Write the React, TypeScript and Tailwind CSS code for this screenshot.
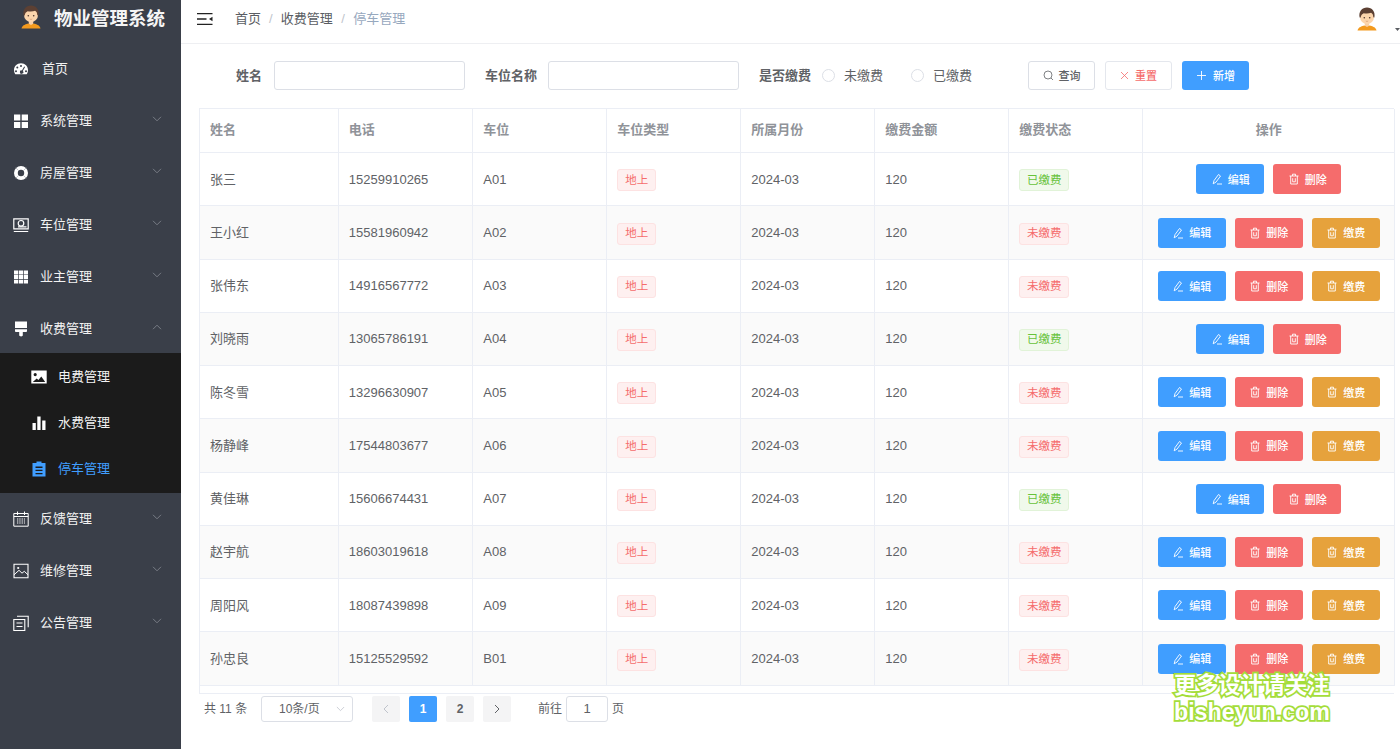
import React from "react";

const ff = "font-['Liberation_Sans','Noto_Sans_CJK_SC',sans-serif]";

function Chevron({ up = false }: { up?: boolean }) {
  return (
    <svg width="10" height="6" viewBox="0 0 10 6" className="text-[#7f838c]" fill="none" stroke="currentColor" strokeWidth="0.9">
      {up ? <path d="M1 5.2 L5 1.2 L9 5.2" /> : <path d="M1 0.8 L5 4.8 L9 0.8" />}
    </svg>
  );
}

const I = ({ children, w = 16, h = 16 }: { children: React.ReactNode; w?: number; h?: number }) => (
  <svg width={w} height={h} viewBox="0 0 16 16" fill="none">{children}</svg>
);

const icons: Record<string, React.ReactNode> = {
  dash: (
    <I><path fillRule="evenodd" clipRule="evenodd" fill="#fff" d="M8 2.200C3.900 2.200 1 5.300 1 9.200c0 1.500.4 2.700 1.100 3.700.2.200.4.300.7.300h10.400c.3 0 .5-.1.7-.3.7-1 1.100-2.200 1.100-3.700 0-3.900-2.900-7-7-7ZM8 4a1 1 0 1 1 0 2 1 1 0 0 1 0-2ZM4.300 5.500a1 1 0 1 1 0 2 1 1 0 0 1 0-2ZM3 9.200a1 1 0 1 1 0 2 1 1 0 0 1 0-2Zm10 0a1 1 0 1 1 0 2 1 1 0 0 1 0-2ZM11.200 5.400l.9.5-2.300 4a1.700 1.700 0 1 1-.9-.5l2.300-4Z" /></I>
  ),
  grid: (
    <I><path fill="#fff" d="M1 1.500h6.300v6.100H1zM8.700 1.500H15v6.100H8.700zM1 8.900h6.300V15H1zM8.700 8.900H15V15H8.700z" /></I>
  ),
  ring: (
    <I><circle cx="8" cy="8" r="5.100" stroke="#fff" strokeWidth="3.800" /><path stroke="#8a8e96" strokeWidth=".5" d="M2.500 2.500l3 3M13.500 2.500l-3 3M2.500 13.500l3-3M13.500 13.500l-3-3" /></I>
  ),
  cam: (
    <I><path stroke="#fff" strokeWidth="1.200" d="M.8 1.800h14.400v10H.8z" /><circle cx="8" cy="6.300" r="2.800" stroke="#fff" strokeWidth="1.200" /><path stroke="#fff" strokeWidth="1.200" d="M5 9.800h8.500M.8 14.500h14.400" /></I>
  ),
  th: (
    <I><path fill="#fff" d="M1 1.500h4.200v3.900H1zM5.900 1.500h4.200v3.900H5.900zM10.800 1.500H15v3.900h-4.200zM1 6.100h4.200v3.900H1zM5.900 6.100h4.200v3.900H5.900zM10.800 6.100H15v3.900h-4.200zM1 10.700h4.200v3.900H1zM5.900 10.700h4.200v3.900H5.900zM10.800 10.700H15v3.900h-4.200z" /></I>
  ),
  brush: (
    <I><path fill="#fff" d="M2 .5h12v6.500H2zM2 8.200h12V10c0 .5-.4 1-1 1H9.800v3.300c0 .7-.8 1.200-1.700 1.200s-1.900-.5-1.900-1.200V11H3c-.6 0-1-.5-1-1z" /></I>
  ),
  image: (
    <I><path fillRule="evenodd" fill="#fff" d="M.3 1.500h15.400v13H.3zM4.200 4a1.600 1.600 0 1 0 0 3.200 1.600 1.600 0 0 0 0-3.200ZM1.800 13h12.400l-3.900-5.500-2.900 3.400-1.700-1.300z" /></I>
  ),
  bars: (
    <I><path fill="#fff" d="M1.500 8h3.300v7H1.500zM6.300 1.500h3.300V15H6.300zM11.200 5.500h3.300V15h-3.300z" /></I>
  ),
  clip: (
    <I><path fillRule="evenodd" fill="#409eff" d="M5.500.5h5V2H14.500v13.500h-13V2H5.500zM4.500 5.500v1.400h7V5.500zM4.500 8.700v1.400h7V8.700zM4.500 11.900v1.400h7v-1.400z" /></I>
  ),
  cal: (
    <I><path stroke="#fff" strokeWidth="1" d="M.8 2.500h14.400v12.700H.8zM.8 5.500h14.400M4.500.5v3.500M11.500.5v3.500" /><path stroke="#fff" strokeWidth="1.100" strokeDasharray="1.300 1" d="M4 8h8M4 10h8M4 12h8" /></I>
  ),
  pic: (
    <I><path stroke="#fff" strokeWidth="1.100" d="M1 1.200h14v13.600H1z" /><path stroke="#fff" strokeWidth="1" d="M1 11.800 6 7.300l3 2.900 2.300-1.900 3.700 3.500" /><circle cx="5.200" cy="5" r="1.100" fill="#fff" /></I>
  ),
  copy: (
    <I><path stroke="#fff" strokeWidth="1.100" d="M.8 4.500h11v11h-11zM4 1.200h11.200v11M3.500 8h6M3.500 11.500h6" /></I>
  ),
};

function TopItem({ icon, label, open, home }: { icon: string; label: string; open?: boolean; home?: boolean }) {
  return (
    <div className="h-[52px] flex items-center pl-[13px] pr-[19px]">
      <span className="w-[16px] h-[16px] flex">{icons[icon]}</span>
      <span className={`${home ? "ml-[13px]" : "ml-[11px]"} text-[13px] text-[#f2f2f2] flex-1`}>{label}</span>
      {!home && <span className="flex -mt-[4px]"><Chevron up={open} /></span>}
    </div>
  );
}

function SubItem({ icon, label, active }: { icon: string; label: string; active?: boolean }) {
  return (
    <div className="h-[46px] flex items-center pl-[31px]">
      <span className="w-[16px] h-[16px] flex">{icons[icon]}</span>
      <span className={`ml-[11px] text-[13px] ${active ? "text-[#409eff]" : "text-[#f2f2f2]"}`}>{label}</span>
    </div>
  );
}

function Avatar({ size }: { size: number }) {
  return (
    <svg width={size} height={size} viewBox="0 0 24 24">
      <path fill="#f39a1e" d="M2.500 23.500c.5-3 4-5 9.500-5s9 2 9.500 5z" />
      <path fill="#f9cfa5" d="M9.800 15h4.400v3.700L12 20l-2.200-1.300z" />
      <ellipse cx="12" cy="10" rx="7" ry="7.200" fill="#fcd5ac" />
      <path fill="#5c4033" d="M4.600 10.500C3.500 4.500 7 .6 12 .6s8.500 3.900 7.400 9.900l-1.100-.2c0-2.400-.9-3.800-2.200-4.500-2.200 1-5.500 1-7.400.4-1.600.9-2.800 2-3 4.200z" />
      <circle cx="9.300" cy="10.800" r=".8" fill="#4a3328" />
      <circle cx="14.700" cy="10.800" r=".8" fill="#4a3328" />
      <path d="M10.800 14c.8.5 1.600.5 2.400 0" stroke="#c98a60" strokeWidth=".6" fill="none" />
    </svg>
  );
}

const Pencil = () => (
  <svg width="12" height="12" viewBox="0 0 12 12" fill="none" stroke="#fff" strokeWidth=".9">
    <path d="M2.200 10.800 3 7.600 7.500 1.500l2 1.500L5 9.100zM6 11h5" />
  </svg>
);
const Trash = () => (
  <svg width="12" height="12" viewBox="0 0 12 12" fill="none" stroke="#fff" strokeWidth=".9">
    <path d="M1.500 3h9M4.500 3V1.200h3V3M2.700 3v8h6.600V3M4.700 5.200v3.600h2.600V5.200" />
  </svg>
);

function Btn({ color, icon, label }: { color: string; icon: React.ReactNode; label: string }) {
  return (
    <span className={`w-[68px] h-[30px] rounded-[3px] ${color} text-white text-[11px] font-medium flex items-center justify-center gap-[5px]`}>
      {icon}
      <span className="translate-y-[1px]">{label}</span>
    </span>
  );
}

type Row = { n: string; p: string; s: string; paid: boolean };
const rows: Row[] = [
  { n: "张三", p: "15259910265", s: "A01", paid: true },
  { n: "王小红", p: "15581960942", s: "A02", paid: false },
  { n: "张伟东", p: "14916567772", s: "A03", paid: false },
  { n: "刘晓雨", p: "13065786191", s: "A04", paid: true },
  { n: "陈冬雪", p: "13296630907", s: "A05", paid: false },
  { n: "杨静峰", p: "17544803677", s: "A06", paid: false },
  { n: "黄佳琳", p: "15606674431", s: "A07", paid: true },
  { n: "赵宇航", p: "18603019618", s: "A08", paid: false },
  { n: "周阳风", p: "18087439898", s: "A09", paid: false },
  { n: "孙忠良", p: "15125529592", s: "B01", paid: false },
];

const heads = ["姓名", "电话", "车位", "车位类型", "所属月份", "缴费金额", "缴费状态"];
const thCls = "border-r border-b border-[#ebeef5] pl-[10px] pb-[1px] text-left font-bold text-[13px] text-[#909399]";
const tdCls = "border-r border-b border-[#ebeef5] pl-[10px] text-[13px] text-[#606266]";

export default function App() {
  return (
    <div className={`${ff} relative w-[1400px] h-[749px] overflow-hidden flex bg-white`}>
      <aside className="w-[181px] shrink-0 bg-[#3a3f49] text-white">
        <div className="h-[43px] flex items-center pl-[19px] pb-[5px]">
          <span className="flex -mt-[4px]"><Avatar size={24} /></span>
          <span className="ml-[11px] text-[18.500px] leading-none font-bold text-[#f5f5f5]">物业管理系统</span>
        </div>
        <TopItem icon="dash" label="首页" home />
        <TopItem icon="grid" label="系统管理" />
        <TopItem icon="ring" label="房屋管理" />
        <TopItem icon="cam" label="车位管理" />
        <TopItem icon="th" label="业主管理" />
        <TopItem icon="brush" label="收费管理" open />
        <div className="bg-[#1b1b1b] h-[140px] -mt-[2px] pt-[1px]">
          <SubItem icon="image" label="电费管理" />
          <SubItem icon="bars" label="水费管理" />
          <SubItem icon="clip" label="停车管理" active />
        </div>
        <TopItem icon="cal" label="反馈管理" />
        <TopItem icon="pic" label="维修管理" />
        <TopItem icon="copy" label="公告管理" />
      </aside>

      <main className="flex-1 min-w-0 flex flex-col">
        <header className="h-[44px] shrink-0 flex items-center border-b border-[#eeeff2] pl-[16px] pb-[5px] relative">
          <svg width="16" height="12" viewBox="0 0 16 12" fill="none" stroke="#222" strokeWidth="1.300">
            <path d="M0 .7h15.500M0 6h9.500M0 11.300h15.500" />
            <path d="M15.500 3.800 12 6l3.500 2.200z" fill="#222" stroke="none" />
          </svg>
          <div className="ml-[22px] flex items-center text-[13px]">
            <span className="text-[#5a5d63]">首页</span>
            <span className="mx-[8px] text-[#c0c4cc]">/</span>
            <span className="text-[#5a5d63]">收费管理</span>
            <span className="mx-[8.500px] text-[#c0c4cc]">/</span>
            <span className="text-[#97a8be]">停车管理</span>
          </div>
          <div className="ml-auto flex items-end">
            <Avatar size={24} />
            <svg width="5" height="3" viewBox="0 0 5 3" className="ml-[16px] mb-[0px]"><path d="M0 0h5L2.500 3z" fill="#5a5d63" /></svg>
          </div>
        </header>

        <div className="pl-[18px] flex-1 min-h-0">
          <form className="h-[65px] flex items-center text-[13px] -mt-[1px]">
            <label className="ml-[37px] w-[26px] font-bold text-[#606266] whitespace-nowrap">姓名</label>
            <span className="ml-[12px] w-[191px] h-[29px] rounded-[3px] border border-[#dcdfe6] bg-white" />
            <label className="ml-[20px] font-bold text-[#606266] whitespace-nowrap">车位名称</label>
            <span className="ml-[11px] w-[191px] h-[29px] rounded-[3px] border border-[#dcdfe6] bg-white" />
            <label className="ml-[20px] font-bold text-[#606266] whitespace-nowrap">是否缴费</label>
            <span className="ml-[11px] w-[13px] h-[13px] rounded-full border border-[#dcdfe6]" />
            <span className="ml-[9px] text-[#606266]">未缴费</span>
            <span className="ml-[28px] w-[13px] h-[13px] rounded-full border border-[#dcdfe6]" />
            <span className="ml-[9px] text-[#606266]">已缴费</span>
            <span className="ml-[56px] w-[67px] h-[29px] rounded-[3px] border border-[#dcdfe6] flex items-center justify-center gap-[5px] text-[11px] font-medium text-[#606266]">
              <svg width="11" height="11" viewBox="0 0 11 11" fill="none" stroke="#606266" strokeWidth=".8"><circle cx="5" cy="5" r="4" /><path d="m8 8 2 2" /></svg>
              <span className="translate-y-[1px]">查询</span>
            </span>
            <span className="ml-[10px] w-[67px] h-[29px] rounded-[3px] border border-[#e4e7ed] flex items-center justify-center gap-[6px] text-[11px] font-medium text-[#f56c6c]">
              <svg width="9" height="9" viewBox="0 0 9 9" fill="none" stroke="#f56c6c" strokeWidth=".8"><path d="m1 1 7 7M8 1 1 8" /></svg>
              <span className="translate-y-[1px]">重置</span>
            </span>
            <span className="ml-[10px] w-[67px] h-[29px] rounded-[3px] bg-[#409eff] flex items-center justify-center gap-[6px] text-[11px] font-medium text-white">
              <svg width="11" height="11" viewBox="0 0 11 11" fill="none" stroke="#fff" strokeWidth=".9"><path d="M5.500 1v9M1 5.500h9" /></svg>
              <span className="translate-y-[1px]">新增</span>
            </span>
          </form>

          <div className="w-[1195px] h-[586px] border border-[#ebeef5] border-r-0">
            <table className="w-[1195px] table-fixed border-separate border-spacing-0">
              <colgroup>
                <col className="w-[138.800px]" />
                <col className="w-[134.500px]" />
                <col className="w-[134px]" />
                <col className="w-[134px]" />
                <col className="w-[134px]" />
                <col className="w-[134px]" />
                <col className="w-[134px]" />
                <col />
              </colgroup>
              <thead>
                <tr className="h-[44.200px]">
                  {heads.map((h) => (
                    <th key={h} className={thCls}>{h}</th>
                  ))}
                  <th className="border-r border-b border-[#ebeef5] pb-[1px] text-center font-bold text-[13px] text-[#909399]">操作</th>
                </tr>
              </thead>
              <tbody>
                {rows.map((r, i) => (
                  <tr key={r.s} className={`h-[53.250px] ${i % 2 ? "bg-[#fafafa]" : "bg-white"}`}>
                    <td className={tdCls}>{r.n}</td>
                    <td className={tdCls}>{r.p}</td>
                    <td className={tdCls}>{r.s}</td>
                    <td className={tdCls}>
                      <span className="inline-flex items-center justify-center w-[39px] h-[22px] rounded-[3px] border border-[#fde2e2] bg-[#fef0f0] text-[11.500px] text-[#f56c6c] translate-y-[1px]">地上</span>
                    </td>
                    <td className={tdCls}>2024-03</td>
                    <td className={tdCls}>120</td>
                    <td className={tdCls}>
                      {r.paid ? (
                        <span className="inline-flex items-center justify-center w-[50px] h-[22px] rounded-[3px] border border-[#e1f3d8] bg-[#f0f9eb] text-[11.500px] text-[#67c23a] translate-y-[1px]">已缴费</span>
                      ) : (
                        <span className="inline-flex items-center justify-center w-[50px] h-[22px] rounded-[3px] border border-[#fde2e2] bg-[#fef0f0] text-[11.500px] text-[#f56c6c] translate-y-[1px]">未缴费</span>
                      )}
                    </td>
                    <td className="border-r border-b border-[#ebeef5]">
                      <div className="flex items-center justify-center gap-[9px]">
                        <Btn color="bg-[#409eff]" icon={<Pencil />} label="编辑" />
                        <Btn color="bg-[#f56c6c]" icon={<Trash />} label="删除" />
                        {!r.paid && <Btn color="bg-[#e6a23c]" icon={<Trash />} label="缴费" />}
                      </div>
                    </td>
                  </tr>
                ))}
              </tbody>
            </table>
          </div>

          <div className="mt-[2px] h-[26px] flex items-center text-[12px] text-[#606266]">
            <span className="ml-[5px] w-[44px] whitespace-nowrap">共 11 条</span>
            <span className="ml-[13px] w-[92px] h-[26px] rounded-[3px] border border-[#dcdfe6] flex items-center pl-[17px] pr-[7px] justify-between">
              <span>10条/页</span>
              <svg width="9" height="6" viewBox="0 0 10 6" fill="none" stroke="#c0c4cc" strokeWidth=".9"><path d="M1 .8l4 4 4-4" /></svg>
            </span>
            <span className="ml-[19px] w-[28px] h-[26px] rounded-[2px] bg-[#f4f4f5] flex items-center justify-center">
              <svg width="6" height="10" viewBox="0 0 6 10" fill="none" stroke="#c0c4cc" strokeWidth="1"><path d="M5 1 1 5l4 4" /></svg>
            </span>
            <span className="ml-[9px] w-[28px] h-[26px] rounded-[2px] bg-[#409eff] text-white font-bold flex items-center justify-center">1</span>
            <span className="ml-[9px] w-[28px] h-[26px] rounded-[2px] bg-[#f4f4f5] font-bold flex items-center justify-center">2</span>
            <span className="ml-[9px] w-[28px] h-[26px] rounded-[2px] bg-[#f4f4f5] flex items-center justify-center">
              <svg width="6" height="10" viewBox="0 0 6 10" fill="none" stroke="#606266" strokeWidth="1"><path d="m1 1 4 4-4 4" /></svg>
            </span>
            <span className="ml-[27px]">前往</span>
            <span className="ml-[4px] w-[42px] h-[26px] rounded-[3px] border border-[#dcdfe6] flex items-center justify-center text-[13px]">1</span>
            <span className="ml-[4px]">页</span>
          </div>
        </div>
      </main>

      <div className="absolute left-[1174px] top-[673px] w-[160px] font-bold text-white [-webkit-text-stroke:3.500px_#a4dd3a] [paint-order:stroke_fill]">
        <div className="text-[22.200px] leading-[26px] whitespace-nowrap">更多设计请关注</div>
        <div className="text-[23.200px] leading-[27px] whitespace-nowrap">bisheyun.com</div>
      </div>
    </div>
  );
}
